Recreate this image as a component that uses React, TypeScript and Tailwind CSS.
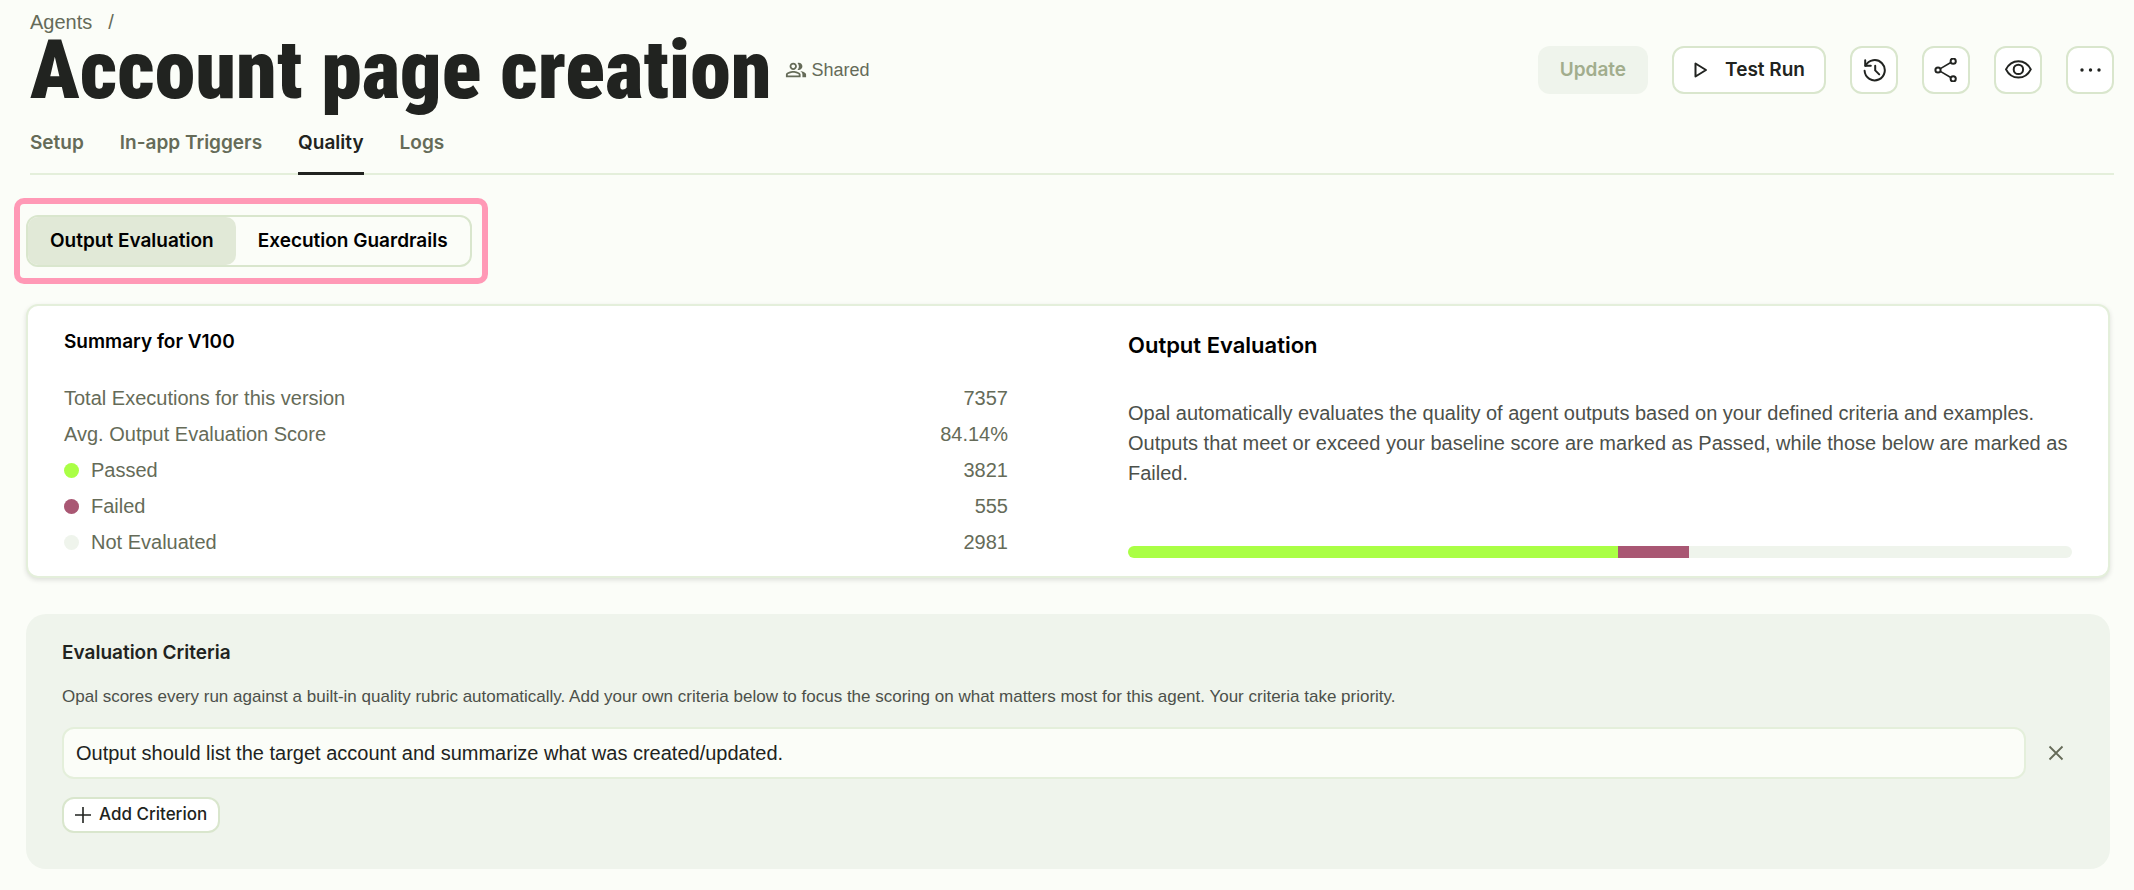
import { useState } from 'react';
import type { ReactNode } from 'react';
import { MdOutlinePeopleAlt } from 'react-icons/md';

// ─── Data ─────────────────────────────────────────────────────────────────────
const TABS = ['Setup', 'In-app Triggers', 'Quality', 'Logs'];
const VIEWS = ['Output Evaluation', 'Execution Guardrails'];

const TOTAL = 7357;

const RESULTS = [
  { label: 'Passed',        value: 3821, color: 'bg-[#aaff45]' },
  { label: 'Failed',        value: 555,  color: 'bg-[#a95773]' },
  { label: 'Not Evaluated', value: 2981, color: 'bg-[#eff4ec]' },
];

// ─── Icons ────────────────────────────────────────────────────────────────────
function PlayIcon() {
  return (
    <svg width="16" height="16" viewBox="0 0 16 16" fill="none" stroke="currentColor" strokeWidth="2" strokeLinejoin="round">
      <path d="M2.5 1.5v13L13 8z" />
    </svg>
  );
}

function HistoryIcon() {
  return (
    <svg width="24" height="24" viewBox="0 0 24 24" fill="none" stroke="currentColor" strokeWidth="2" strokeLinecap="round" strokeLinejoin="round">
      <path d="M3.2 2.2v5.6h5.6" />
      <path d="M3.6 7.8a10.1 10.1 0 1 1-1 5" />
      <path d="M13.2 7.8v4.6l4 4" />
    </svg>
  );
}

function ShareIcon() {
  return (
    <svg width="24" height="24" viewBox="0 0 24 24" fill="none" stroke="currentColor">
      <path d="M6.4 10.6 16.8 4.5M6.4 13.4l10.4 6.1" strokeWidth="1.6" />
      <g strokeWidth="2">
        <circle cx="4" cy="12" r="2.6" />
        <circle cx="19.2" cy="3.2" r="2.6" />
        <circle cx="19.2" cy="20.8" r="2.6" />
      </g>
    </svg>
  );
}

function EyeIcon() {
  return (
    <svg width="28" height="28" viewBox="0 0 28 28" fill="none" stroke="currentColor" strokeWidth="2" strokeLinejoin="round">
      <path d="M2 13.4C4.6 8.2 9.2 5.2 14.4 5.2s9.8 3 12.4 8.2c-2.6 5.2-7.2 8.2-12.4 8.2S4.6 18.6 2 13.4z" />
      <circle cx="14.4" cy="13.4" r="4.7" />
    </svg>
  );
}

function DotsIcon() {
  return (
    <svg width="24" height="24" viewBox="0 0 24 24" fill="currentColor">
      <circle cx="4" cy="12" r="1.7" />
      <circle cx="12.5" cy="12" r="1.7" />
      <circle cx="21" cy="12" r="1.7" />
    </svg>
  );
}

function IconBtn({ label, children }: { label: string; children: ReactNode }) {
  return (
    <button aria-label={label} className="flex size-12 items-center justify-center rounded-xl border-2 border-[#d9e6cd] bg-white">
      {children}
    </button>
  );
}

// ─── Header ───────────────────────────────────────────────────────────────────
function Header() {
  const [tab, setTab] = useState('Quality');

  return (
    <header className="pt-2 pr-5 pl-[30px]">
      <div className="flex gap-4 text-xl leading-7 text-[#656b58]">
        <a href="#agents">Agents</a>
        <span>/</span>
      </div>

      <div className="flex items-center justify-between">
        <div className="flex items-center gap-3.5">
          <h1 className='font-["Roboto_Condensed",sans-serif] text-[82px] leading-[68px] font-black text-[#212320]'>
            Account page creation
          </h1>
          <div className="flex items-center gap-1 text-lg text-[#656b58]">
            <MdOutlinePeopleAlt size={22} />
            Shared
          </div>
        </div>

        <div className='flex items-center gap-6 font-["Inter",sans-serif] text-[19px] font-semibold text-[#212320]'>
          <button disabled className="h-12 rounded-xl bg-[#eff4ec] px-[22px] text-[#a2ad8d]">Update</button>
          <button className="flex h-12 items-center gap-4 rounded-xl border-2 border-[#d9e6cd] bg-white px-[19px]">
            <PlayIcon />
            Test Run
          </button>
          <IconBtn label="Version history"><HistoryIcon /></IconBtn>
          <IconBtn label="Share"><ShareIcon /></IconBtn>
          <IconBtn label="Preview"><EyeIcon /></IconBtn>
          <IconBtn label="More"><DotsIcon /></IconBtn>
        </div>
      </div>

      <nav className='mt-[25px] flex gap-9 border-b-2 border-[#e4efdb] font-["Inter",sans-serif] text-[19px] leading-7 font-semibold'>
        {TABS.map((t) => (
          <a
            key={t}
            href={`#${t}`}
            onClick={() => setTab(t)}
            className={`-mb-0.5 border-b-[3px] pb-[15px] ${t === tab ? 'border-[#212320] text-[#212320]' : 'border-transparent text-[#656b58]'}`}
          >
            {t}
          </a>
        ))}
      </nav>
    </header>
  );
}

// ─── Output Evaluation / Execution Guardrails switch ──────────────────────────
function ViewSwitch() {
  const [view, setView] = useState(VIEWS[0]);

  return (
    <div className="mt-[23px] ml-3.5 w-fit rounded-[10px] border-6 border-[#ff99b6] py-[11px] pr-2.5 pl-1.5">
      <div className='flex h-[52px] rounded-xl border-2 border-[#d9e6cd] font-["Inter",sans-serif] text-[19px] font-semibold text-black'>
        {VIEWS.map((v) => (
          <button
            key={v}
            onClick={() => setView(v)}
            className={`rounded-[10px] px-[22px] ${v === view ? 'bg-[#e1e9d7]' : ''}`}
          >
            {v}
          </button>
        ))}
      </div>
    </div>
  );
}

// ─── Summary ──────────────────────────────────────────────────────────────────
function SummaryRow({ label, value, dot }: { label: string; value: string; dot?: string }) {
  return (
    <div className="flex h-9 items-center justify-between">
      <dt className="flex items-center gap-3">
        {dot && <span className={`size-[15px] rounded-full ${dot}`} />}
        {label}
      </dt>
      <dd>{value}</dd>
    </div>
  );
}

function SummaryCard() {
  return (
    <section className="mt-5 grid grid-cols-2 gap-x-[120px] rounded-xl border-2 border-[#e4efdb] bg-white px-9 shadow-[0_2px_5px_rgba(0,0,0,0.12)]">
      <div className="pt-[22px] pb-4">
        <h2 className='font-["Inter",sans-serif] text-[19px] leading-7 font-semibold text-black'>Summary for V100</h2>
        <dl className="mt-6 text-xl text-[#656b58]">
          <SummaryRow label="Total Executions for this version" value={String(TOTAL)} />
          <SummaryRow label="Avg. Output Evaluation Score" value="84.14%" />
          {RESULTS.map((r) => (
            <SummaryRow key={r.label} label={r.label} value={String(r.value)} dot={r.color} />
          ))}
        </dl>
      </div>

      <div className="flex flex-col pt-6 pb-[18px]">
        <h2 className='font-["Inter",sans-serif] text-[22px] leading-[30px] font-semibold text-black'>Output Evaluation</h2>
        <p className="mt-[38px] text-xl leading-[30px] text-[#4c504a]">
          Opal automatically evaluates the quality of agent outputs based on your defined criteria and examples.
          Outputs that meet or exceed your baseline score are marked as Passed, while those below are marked as
          Failed.
        </p>
        <div className="mt-auto flex h-3 overflow-hidden rounded-full">
          {RESULTS.map((r) => (
            <div key={r.label} className={r.color} style={{ width: `${(r.value / TOTAL) * 100}%` }} />
          ))}
        </div>
      </div>
    </section>
  );
}

// ─── Criteria ─────────────────────────────────────────────────────────────────
function CriteriaPanel() {
  const [criteria, setCriteria] = useState([
    'Output should list the target account and summarize what was created/updated.',
  ]);

  return (
    <section className="mt-9 rounded-[20px] bg-[#eff4ec] px-9 pt-[25px] pb-9">
      <h2 className='font-["Inter",sans-serif] text-[19px] leading-7 font-semibold text-[#212320]'>Evaluation Criteria</h2>
      <p className="mt-4 text-[17px] leading-7 text-[#4c504a]">
        Opal scores every run against a built-in quality rubric automatically. Add your own criteria below to focus the
        scoring on what matters most for this agent. Your criteria take priority.
      </p>

      {criteria.map((c, i) => (
        <div key={i} className="mt-4 flex items-center gap-3">
          <input
            aria-label={`Criterion ${i + 1}`}
            value={c}
            onChange={(e) => setCriteria(criteria.map((x, j) => (j === i ? e.target.value : x)))}
            className="h-[52px] min-w-0 flex-1 rounded-xl border-2 border-[#e4efdb] bg-[#fbfdf8] px-3 text-xl text-[#212320]"
          />
          <button
            aria-label="Remove criterion"
            onClick={() => setCriteria(criteria.filter((_, j) => j !== i))}
            className="flex size-9 items-center justify-center text-[#656b58]"
          >
            <svg width="16" height="16" viewBox="0 0 16 16" stroke="currentColor" strokeWidth="1.8">
              <path d="M1.5 1.5l13 13M14.5 1.5l-13 13" />
            </svg>
          </button>
        </div>
      ))}

      <button
        onClick={() => setCriteria([...criteria, ''])}
        className='mt-[18px] flex h-9 items-center gap-2 rounded-xl border-2 border-[#d9e6cd] bg-white px-[11px] font-["Inter",sans-serif] text-[17px] font-medium text-[#212320]'
      >
        <svg width="16" height="16" viewBox="0 0 16 16" stroke="currentColor" strokeWidth="1.6">
          <path d="M8 0v16M0 8h16" />
        </svg>
        Add Criterion
      </button>
    </section>
  );
}

export default function App() {
  return (
    <div className='min-h-screen bg-[#fbfdf8] pb-5 font-["Liberation_Sans",Arial,sans-serif]'>
      <Header />
      <main>
        <ViewSwitch />
        <div className="pr-6 pl-[26px]">
          <SummaryCard />
          <CriteriaPanel />
        </div>
      </main>
    </div>
  );
}
